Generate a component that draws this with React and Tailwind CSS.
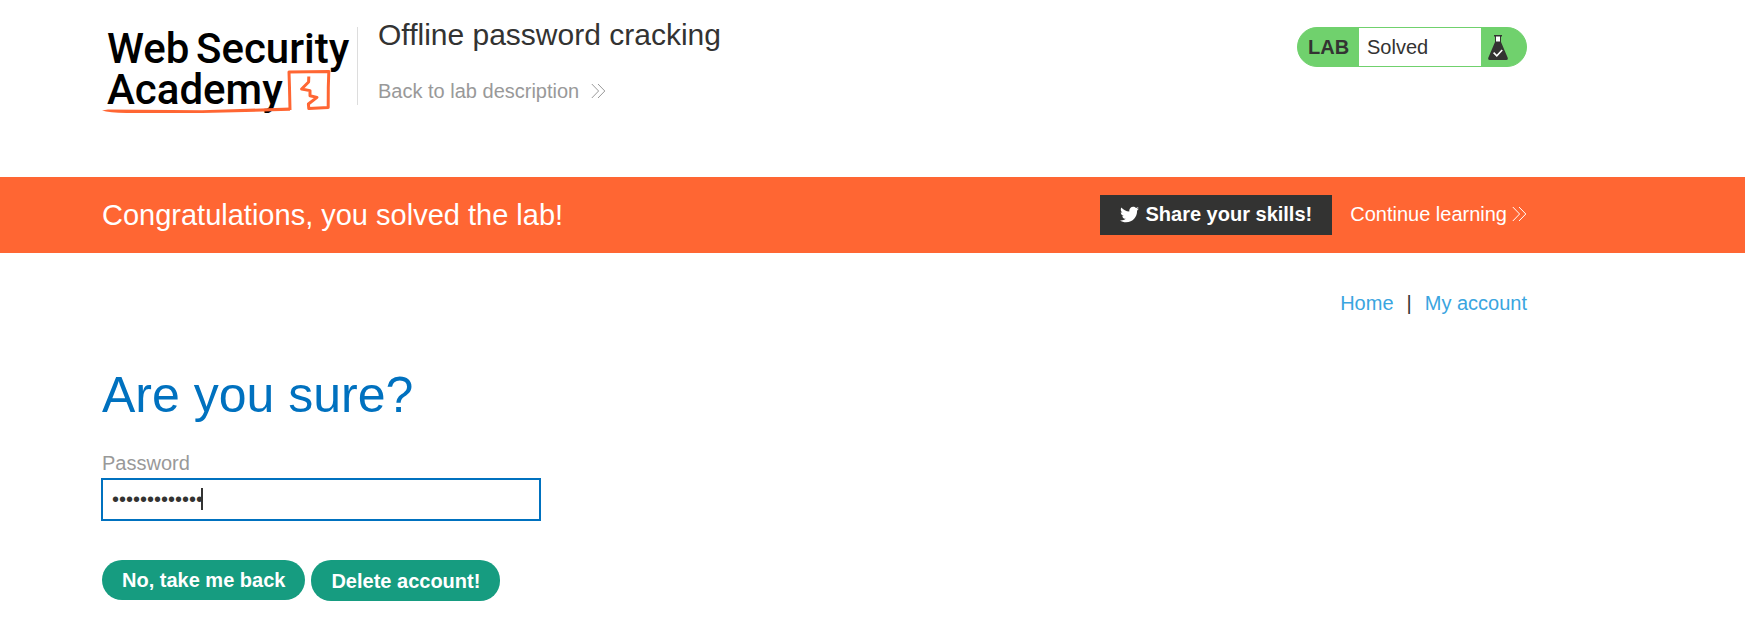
import { useState } from "react";
import { FaTwitter } from "react-icons/fa";

function Logo() {
  return (
    <svg
      className="h-24 w-[252px] shrink-0"
      viewBox="0 0 252 96"
      role="img"
      aria-label="Web Security Academy"
    >
      <text fill="#000" fontFamily="Roboto, sans-serif" fontWeight="500" fontSize="42">
        <tspan x="5" y="41">Web</tspan>
        <tspan x="94" y="41">Security</tspan>
        <tspan x="5" y="82">Academy</tspan>
      </text>
      <path
        d="M0 88.6 L6 87.6 L100 88.2 L188 85.6 L188 88.8 L100 91 L30 91 Q8 91.4 0 88.6Z"
        fill="#ff6633"
      />
      <path
        d="M188 88 L187.500 66 L187 50 L226.800 49.500 L226.300 65 L226.200 85.600 L206.800 86.600 L206.400 82 L215 75.400 L208 73.800 L208 68.600 L199.600 67 L206.600 60 L206.800 54.500"
        fill="none"
        stroke="#ff6633"
        strokeWidth="3"
        strokeLinejoin="round"
      />
    </svg>
  );
}

function DoubleChevron() {
  return (
    <svg className="h-4 w-[15px] shrink-0" viewBox="0 0 15 16" fill="none" stroke="currentColor" aria-hidden="true">
      <path d="M0.8 1 L7.6 8 L0.8 15 M7 1 L13.8 8 L7 15" />
    </svg>
  );
}

function Flask() {
  return (
    <svg className="h-[25px] w-5" viewBox="0 0 20 25" aria-hidden="true">
      <path d="M6 0h8v1.5h-1V7l6.600 15.500Q20.400 25 18.200 25H1.800Q-.4 25 .4 22.500L7 7V1.500H6z" fill="#333332" />
      <path d="M8 1.500h4V6.500H8z" fill="#fff" />
      <path d="M5.600 17.600 L8.800 20.800 L14.200 15" fill="none" stroke="#fff" strokeWidth="1.6" />
    </svg>
  );
}

export default function App() {
  const [password, setPassword] = useState("correcthorses");

  return (
    <div className="bg-white font-['Liberation_Sans',Arial,sans-serif] text-xl leading-6 text-[#333332]">
      <header className="flex h-[177px] items-start pl-[102px] pr-[218px] pt-[22px]">
        <Logo />
        <div className="ml-[3px] mt-[5px] h-[78px] w-px bg-[#dddddd]" />
        <div className="ml-5 -mt-1 flex-1">
          <h2 className="text-[30px] leading-[34px]">Offline password cracking</h2>
          <a href="#description" className="mt-[27px] inline-flex items-center gap-3 text-[#999999]">
            Back to lab description
            <DoubleChevron />
          </a>
        </div>
        <div className="mt-[5px] flex h-10 w-[230px] overflow-hidden rounded-[20px] border border-[#70d16d] bg-[#70d16d]">
          <p className="flex w-[61px] items-center pl-[10px] font-bold">LAB</p>
          <p className="flex flex-1 items-center bg-white pl-2">Solved</p>
          <span className="flex w-[45px] items-center pl-[7px]">
            <Flask />
          </span>
        </div>
      </header>

      <section className="flex h-[76px] items-center bg-[#ff6633] pl-[102px] pr-[218px] text-white">
        <h4 className="flex-1 text-[29px] leading-8">Congratulations, you solved the lab!</h4>
        <button type="button" className="flex h-10 items-center gap-[6px] bg-[#333332] px-5 pb-[2px] font-bold">
          <FaTwitter className="size-[19px]" aria-hidden="true" />
          Share your skills!
        </button>
        <a href="#continue" className="ml-[18px] flex items-center gap-[5px] pb-[2px]">
          Continue learning
          <DoubleChevron />
        </a>
      </section>

      <main className="pb-10 pl-[102px] pr-[218px] pt-[38px]">
        <nav className="flex justify-end gap-[13px]">
          <a href="#home" className="text-[#3aa5df]">Home</a>
          <span>|</span>
          <a href="#account" className="text-[#3aa5df]">My account</a>
        </nav>

        <h1 className="mt-[52px] text-[50px] leading-[56px] text-[#0071bf]">Are you sure?</h1>

        <form className="mt-[28px]" onSubmit={(e) => e.preventDefault()}>
          <label htmlFor="password" className="block text-[#999999]">Password</label>
          <div className="relative -ml-px mt-[3px] max-w-[440px]">
            <input
              id="password"
              type="password"
              autoComplete="off"
              value={password}
              onChange={(e) => setPassword(e.target.value)}
              className="block h-[43px] w-full border-2 border-[#0071bf] px-[9px] caret-transparent outline-none"
            />
            <span className="absolute left-[100px] top-[10px] h-[22px] w-[2px] bg-[#333332]" />
          </div>
          <div className="mt-[39px] flex items-start gap-[6px] font-bold text-white">
            <button type="button" className="h-10 rounded-[20px] bg-[#169c80] px-5">No, take me back</button>
            <button type="submit" className="h-[41px] rounded-[20px] bg-[#169c80] px-5">Delete account!</button>
          </div>
        </form>
      </main>
    </div>
  );
}
